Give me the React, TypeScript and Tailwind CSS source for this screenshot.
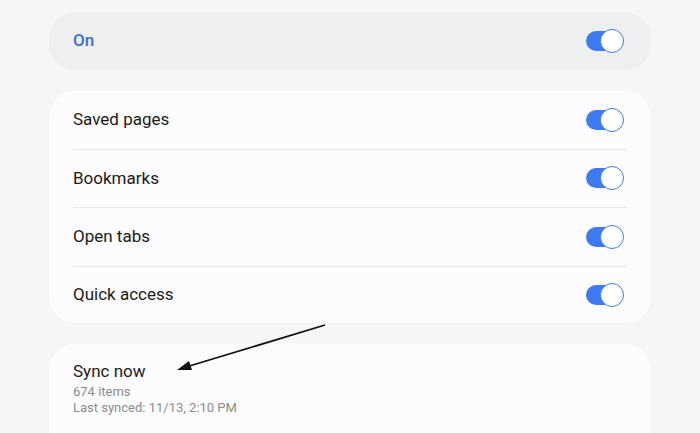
import React from 'react';

function Toggle() {
  return (
    <div className="relative w-[38px] h-[24px] flex items-center">
      <div className="w-[34px] h-[20px] rounded-full bg-[#3f7bf0]" />
      <div className="absolute right-0 top-0 w-[24px] h-[24px] rounded-full bg-white border-[1.5px] border-[#3f7bf0]" />
    </div>
  );
}

const items = ['Saved pages', 'Bookmarks', 'Open tabs', 'Quick access'];

export default function App() {
  return (
    <div
      className="relative w-[700px] h-[433px] overflow-hidden bg-[#f5f6f8] px-[49px] pt-[12px]"
      style={{ fontFamily: 'Roboto, "Noto Sans", sans-serif' }}
    >
      <div className="h-[58px] rounded-[26px] bg-[#eeeff1] flex items-center justify-between pl-[24px] pr-[27px]">
        <span className="text-[17px] font-medium text-[#3e6ed6]">On</span>
        <Toggle />
      </div>

      <div className="mt-[21px] rounded-[26px] bg-[#fcfcfe] px-[24px]">
        {items.map((label, i) => (
          <div
            key={label}
            className={
              'flex items-center justify-between pr-[3px] ' +
              (i < items.length - 1 ? 'h-[58.5px] border-b border-[#e8e8ea]' : 'h-[56px]')
            }
          >
            <span className="text-[17px] text-[#1a1a1a]">{label}</span>
            <Toggle />
          </div>
        ))}
      </div>

      <div className="mt-[21px] rounded-t-[26px] bg-[#fcfcfe] px-[24px] pt-[16px]">
        <div className="border-b border-[#e8e8ea] pb-[18px]">
          <div className="text-[17px] text-[#1a1a1a] leading-[22px]">Sync now</div>
          <div className="text-[13px] text-[#8c8c8c] leading-[16px] mt-[2px]">674 items</div>
          <div className="text-[13px] text-[#8c8c8c] leading-[16px]">Last synced: 11/13, 2:10 PM</div>
        </div>
      </div>

      <svg className="absolute left-0 top-0 pointer-events-none" width="700" height="433">
        <line x1="325" y1="325" x2="186" y2="367" stroke="#111" strokeWidth="1.8" />
        <polygon points="177,370 189,361 192,370" fill="#111" />
      </svg>
    </div>
  );
}
